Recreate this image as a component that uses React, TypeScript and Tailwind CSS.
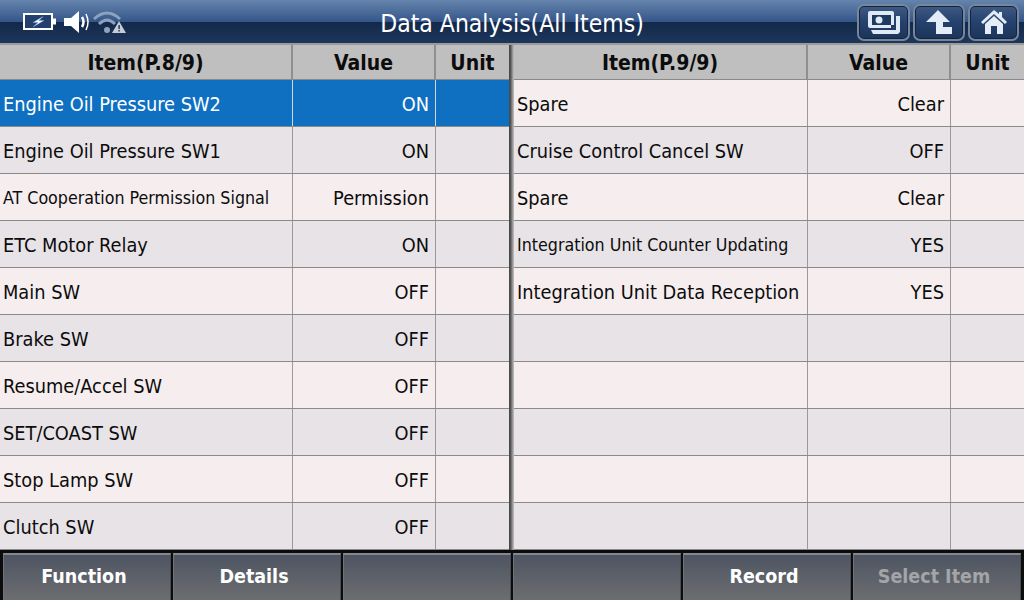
const font = { fontFamily: '"DejaVu Sans", Tahoma, sans-serif', fontStretch: "condensed" };

type Row = [string, string, boolean?];
const left: Row[] = [
  ["Engine Oil Pressure SW2", "ON"],
  ["Engine Oil Pressure SW1", "ON"],
  ["AT Cooperation Permission Signal", "Permission", true],
  ["ETC Motor Relay", "ON"],
  ["Main SW", "OFF"],
  ["Brake SW", "OFF"],
  ["Resume/Accel SW", "OFF"],
  ["SET/COAST SW", "OFF"],
  ["Stop Lamp SW", "OFF"],
  ["Clutch SW", "OFF"],
];
const right: Row[] = [
  ["Spare", "Clear"],
  ["Cruise Control Cancel SW", "OFF"],
  ["Spare", "Clear"],
  ["Integration Unit Counter Updating", "YES", true],
  ["Integration Unit Data Reception", "YES"],
  ["", ""],
  ["", ""],
  ["", ""],
  ["", ""],
  ["", ""],
];

function Table({ title, rows, selected, cols, width }: { title: string; rows: Row[]; selected?: number; cols: string; width: string }) {
  return (
    <div className={`${width} flex flex-col`}>
      <div className={`h-[35px] grid ${cols} bg-[#bfbfbf] border-b border-[#8a8a8a] text-[#0c0c0c] font-bold text-[21px] leading-[37px] text-center`}>
        <div className="h-[34px] border-r-2 border-[#8f8f8f]">{title}</div>
        <div className="h-[34px] border-r-2 border-[#8f8f8f]">Value</div>
        <div className="h-[34px]">Unit</div>
      </div>
      {rows.map((r, i) => {
        const sel = selected === i;
        const bg = sel ? "bg-[#0f6fc0] text-white" : i % 2 === 0 ? "bg-[#f6eeee] text-[#0c0c0c]" : "bg-[#e7e3e7] text-[#0c0c0c]";
        const line = sel ? "border-[#d0d8e0]" : "border-[#9a9a9a]";
        return (
          <div key={i} className={`h-[47px] grid ${cols} border-b border-[#8a8a8a] ${bg} text-[19.8px] leading-[50px]`}>
            <div className={`h-[46px] pl-[3px] whitespace-nowrap border-r ${line} ${r[2] ? "text-[17.7px] leading-[48px]" : ""}`}>{r[0]}</div>
            <div className={`h-[46px] pr-[6px] text-right border-r ${line}`}>{r[1]}</div>
            <div className="h-[46px]" />
          </div>
        );
      })}
    </div>
  );
}

function Btn({ children, disabled }: { children?: string; disabled?: boolean }) {
  return (
    <div className={`h-[47px] pr-[6px] border-t-2 border-l border-r border-t-[#85888e] border-l-[#6f747c] border-r-[#494d55] bg-gradient-to-b from-[#4e5562] to-[#6c6d70] text-center font-bold text-[19.5px] leading-[44px] ${disabled ? "text-[#a3a5a8]" : "text-white"}`}>
      {children}
    </div>
  );
}

function TopBtn({ children, w }: { children: React.ReactNode; w: string }) {
  return (
    <div className={`${w} h-[37px] rounded-[7px] border-2 border-[#76869b] bg-gradient-to-b from-[#3f5a83] via-[#24416d] via-50% to-[#1c3459] flex items-center justify-center shadow-[inset_0_0_0_1px_#122440]`}>
      {children}
    </div>
  );
}

export default function App() {
  return (
    <div className="w-[1024px] h-[600px] overflow-hidden flex flex-col bg-black" style={font}>
      <div className="h-[43px] relative flex items-center bg-[linear-gradient(to_bottom,#6584ac_0%,#35568a_50%,#13294b_52%,#1d365b_100%)]">
        <div className="flex items-center pl-[23px]">
          <svg width="34" height="19" viewBox="0 0 34 19">
            <rect x="1" y="2" width="28" height="15" fill="#23406c" stroke="#fff" strokeWidth="2" />
            <rect x="29" y="6.5" width="4" height="6" fill="#fff" />
            <path d="M20 4.5 L10 10.5 H15 L10 15 L21 8.5 H16 Z" fill="#fff" stroke="#6f9ad6" strokeWidth="0.5" />
          </svg>
          <svg width="28" height="24" viewBox="0 0 28 24" className="ml-[6px]">
            <path d="M1 8 H8 L16 1 V23 L8 16 H1 Z" fill="#fff" />
            <path d="M19 7 Q22 12 19 17" stroke="#fff" strokeWidth="2.5" fill="none" />
            <path d="M23 4 Q27 12 23 20" stroke="#fff" strokeWidth="1.5" fill="none" />
          </svg>
          <svg width="34" height="24" viewBox="0 0 34 24" className="ml-[2px]">
            <path d="M1 9 Q14 -3 27 9" stroke="#8fa2bb" strokeWidth="3" fill="none" />
            <path d="M6 14 Q14 6 22 14" stroke="#8fa2bb" strokeWidth="3" fill="none" />
            <circle cx="14" cy="20" r="3" fill="#8fa2bb" />
            <path d="M26 11 L33 23 H19 Z" fill="#c4ccd6" />
            <rect x="25.4" y="15" width="1.4" height="4" fill="#1b3150" />
            <rect x="25.4" y="20" width="1.4" height="1.5" fill="#1b3150" />
          </svg>
        </div>
        <div className="absolute left-0 right-0 top-0 text-center text-white text-[24.5px] leading-[47px]">Data Analysis(All Items)</div>
        <div className="ml-auto flex gap-[3px] pr-[5px] pt-[1px]">
          <TopBtn w="w-[53px]">
            <svg width="34" height="24" viewBox="0 0 34 24">
              <rect x="1" y="1" width="26" height="17" rx="2" fill="#dfeaf6" />
              <rect x="5" y="5" width="19" height="10" fill="#1f3a60" />
              <circle cx="12" cy="10" r="3.5" fill="#dfeaf6" />
              <path d="M4 20 H29 V6 H33 V22 L31 24 H6 Z" fill="#dfeaf6" />
              <path d="M24 15 L29 15 L24 20 Z" fill="#1f3a60" />
            </svg>
          </TopBtn>
          <TopBtn w="w-[52px]">
            <svg width="28" height="26" viewBox="0 0 28 26"><path d="M13 1 L25 13 H18 V18 H27 V25 H11 V13 H1 Z" fill="#e4edf7" /></svg>
          </TopBtn>
          <TopBtn w="w-[51px]">
            <svg width="26" height="26" viewBox="0 0 26 26"><path d="M13 1 L18 5 V3 H21 V8 L26 13 L24 15 L13 5 L2 15 L0 13 Z" fill="#e4edf7" /><path d="M4 15 L13 7 L22 15 V25 H16 V17 H10 V25 H4 Z" fill="#e4edf7" /></svg>
          </TopBtn>
        </div>
      </div>
      <div className="h-[2px] bg-[#9b9b9b]" />
      <div className="flex h-[505px] bg-[#f6eeee]">
        <Table title="Item(P.8/9)" rows={left} selected={0} cols="grid-cols-[293px_143px_1fr]" width="w-[509px]" />
        <div className="w-[5px] bg-[linear-gradient(to_right,#444444_0%,#555555_30%,#c5c5c5_100%)]" />
        <Table title="Item(P.9/9)" rows={right} cols="grid-cols-[294px_143px_1fr]" width="w-[510px]" />
      </div>
      <div className="h-[50px] pt-[3px] grid grid-cols-6 gap-[2px] bg-[#0c0c0c] pl-[3px] pr-[3px]">
        <Btn>Function</Btn>
        <Btn>Details</Btn>
        <Btn />
        <Btn />
        <Btn>Record</Btn>
        <Btn disabled>Select Item</Btn>
      </div>
    </div>
  );
}
